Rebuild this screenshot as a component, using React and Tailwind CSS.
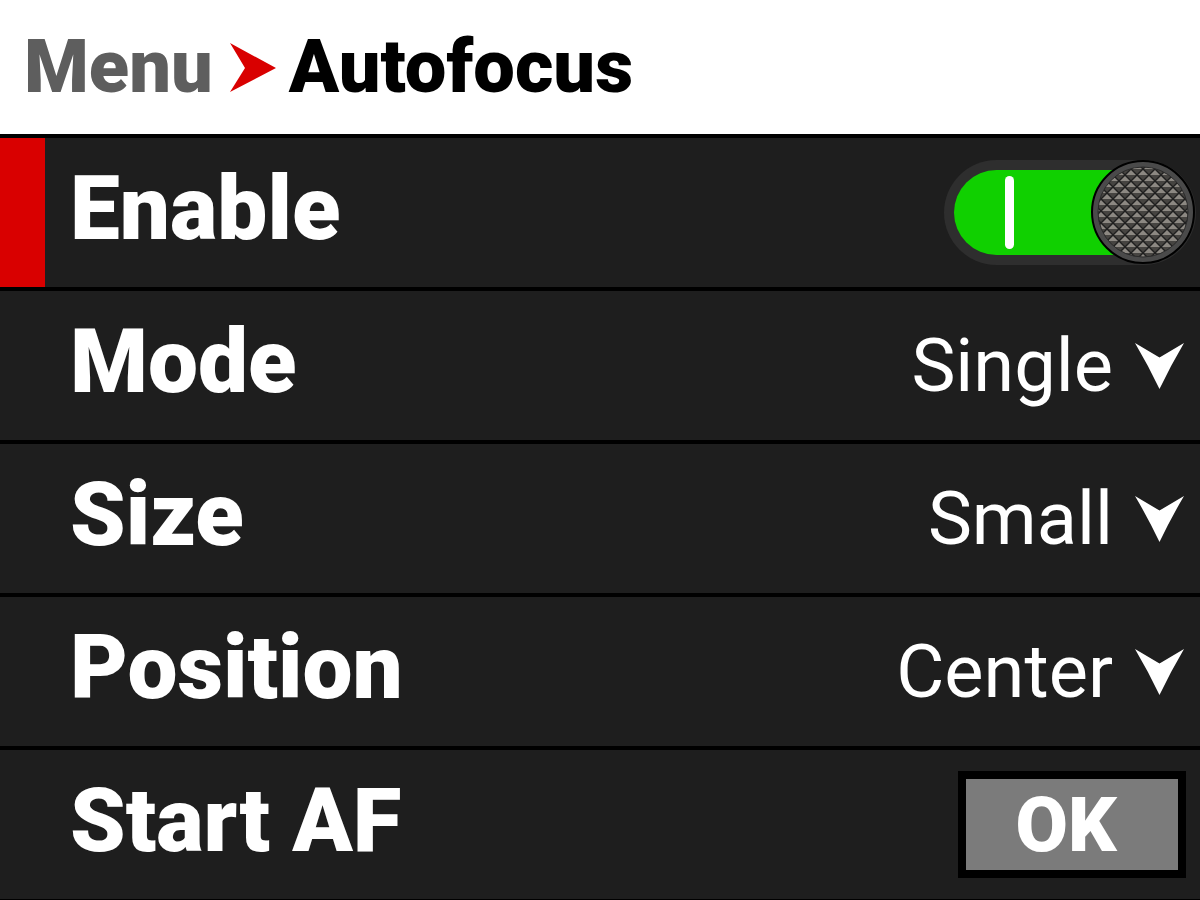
import { useState } from "react";

function Chevron() {
  return (
    <svg width="49" height="46" viewBox="0 0 49 46" className="shrink-0">
      <path d="M0 0 L24.5 14.5 L49 0 Q36 22 24.5 46 Q13 22 0 0 Z" fill="#ffffff" />
    </svg>
  );
}

// knurled knob, diamond lattice lit from the top
const CENTERS = [[6, 6], [0, 0], [12, 0], [0, 12], [12, 12]];

function Knob() {
  return (
    <svg width="104" height="104" viewBox="0 0 104 104" className="absolute right-[1px] top-[0px]">
      <defs>
        <pattern id="knurl" width="12" height="12" patternUnits="userSpaceOnUse" patternTransform="translate(4 3)">
          <rect width="12" height="12" fill="#1f1f1f" />
          {CENTERS.map(([x, y]) => (
            <g key={`${x}-${y}`}>
              <polygon points={`${x - 5},${y} ${x},${y - 5} ${x + 5},${y}`} fill="#8c8882" />
              <polygon points={`${x - 5},${y} ${x + 5},${y} ${x},${y + 5}`} fill="#464441" />
            </g>
          ))}
        </pattern>
      </defs>
      <circle cx="52" cy="52" r="51" fill="#4a4a4a" stroke="#000000" strokeWidth="2" />
      <circle cx="52" cy="52" r="45" fill="url(#knurl)" />
      <circle cx="52" cy="52" r="45" fill="none" stroke="#2a2a2a" strokeWidth="1" />
    </svg>
  );
}

function Toggle({ on, onToggle }) {
  return (
    <button onClick={onToggle} className="relative w-[252px] h-[105px] rounded-full bg-[#2e2e2e] flex items-center">
      <div className={`ml-[10px] h-[85px] w-[200px] rounded-l-full flex items-center ${on ? 'bg-[#10d000]' : 'bg-[#555555]'}`}>
        <div className="ml-[51px] w-[9px] h-[73px] rounded-full bg-white" />
      </div>
      <Knob />
    </button>
  );
}

function Row({ label, active, children }) {
  return (
    <div className="h-[149px] bg-[#1e1e1e] flex items-center">
      <div className={`w-[45px] h-full ${active ? 'bg-[#d90000]' : ''}`} />
      <div className="flex-1 pl-[25px] pb-[8px] text-white font-black text-[89px] leading-none">{label}</div>
      {children}
    </div>
  );
}

function Select({ value }) {
  return (
    <div className="flex items-center gap-[22px] pr-[16px] text-white text-[74px] leading-none">
      <span>{value}</span>
      <Chevron />
    </div>
  );
}

export default function App() {
  const [enabled, setEnabled] = useState(true);

  return (
    <div className="w-[1200px] h-[900px] bg-black flex flex-col gap-[4px] pb-[1px] font-['Roboto',sans-serif] overflow-hidden">
      <div className="h-[134px] shrink-0 bg-white flex items-center pl-[24px]">
        <span className="text-[74px] font-black leading-none text-[#5e5e5e]">Menu</span>
        <svg width="46" height="49" viewBox="0 0 46 49" className="ml-[17px] mr-[13px]">
          <polygon points="0,0 46,25 0,49 15,25" fill="#d90000" />
        </svg>
        <span className="text-[74px] font-black leading-none text-black">Autofocus</span>
      </div>

      <Row label="Enable" active>
        <div className="pr-[4px]">
          <Toggle on={enabled} onToggle={() => setEnabled(!enabled)} />
        </div>
      </Row>
      <Row label="Mode">
        <Select value="Single" />
      </Row>
      <Row label="Size">
        <Select value="Small" />
      </Row>
      <Row label="Position">
        <Select value="Center" />
      </Row>
      <Row label="Start AF">
        <div className="mr-[14px] border-[8px] border-black bg-[#7b7b7b] w-[228px] h-[107px] flex items-center justify-center pr-[12px]">
          <span className="text-white font-black text-[76px] leading-none">OK</span>
        </div>
      </Row>
    </div>
  );
}
